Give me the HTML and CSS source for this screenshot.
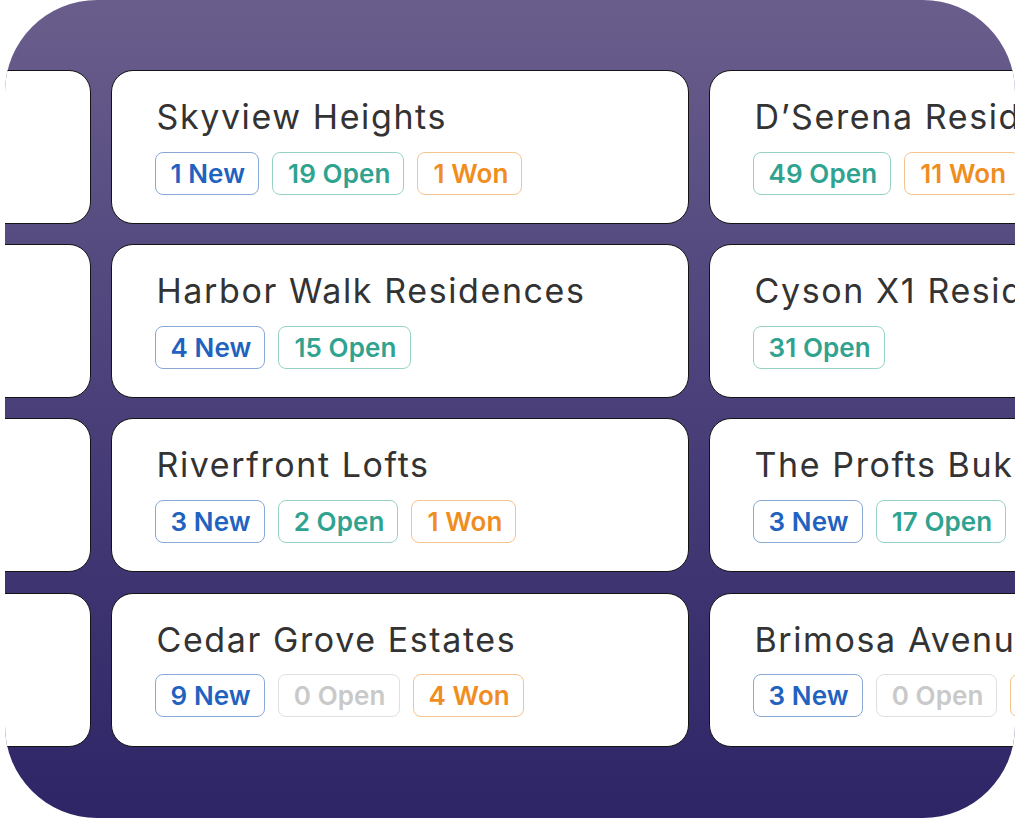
FILE: index.html
```html
<!DOCTYPE html>
<html lang="en">
<head>
<meta charset="utf-8">
<title>Projects</title>
<link rel="stylesheet" href="styles.css">
</head>
<body>
<div class="frame">
  <div class="grid">
    <div class="card"><div class="title">Parkside</div><div class="badges"><span class="badge new">2 New</span></div></div>
    <div class="card"><div class="title">Skyview Heights</div><div class="badges"><span class="badge new">1 New</span><span class="badge open">19 Open</span><span class="badge won">1 Won</span></div></div>
    <div class="card"><div class="title">D’Serena Residences</div><div class="badges"><span class="badge open">49 Open</span><span class="badge won">11 Won</span></div></div>

    <div class="card"><div class="title">Marina</div><div class="badges"><span class="badge open">5 Open</span></div></div>
    <div class="card"><div class="title">Harbor Walk Residences</div><div class="badges"><span class="badge new">4 New</span><span class="badge open">15 Open</span></div></div>
    <div class="card"><div class="title">Cyson X1 Residences</div><div class="badges"><span class="badge open">31 Open</span></div></div>

    <div class="card"><div class="title">Lakeview</div><div class="badges"><span class="badge new">1 New</span></div></div>
    <div class="card"><div class="title">Riverfront Lofts</div><div class="badges"><span class="badge new">3 New</span><span class="badge open">2 Open</span><span class="badge won">1 Won</span></div></div>
    <div class="card"><div class="title">The Profts Bukit Timah</div><div class="badges"><span class="badge new">3 New</span><span class="badge open">17 Open</span></div></div>

    <div class="card"><div class="title">Oakwood</div><div class="badges"><span class="badge won">2 Won</span></div></div>
    <div class="card"><div class="title">Cedar Grove Estates</div><div class="badges"><span class="badge new">9 New</span><span class="badge zero">0 Open</span><span class="badge won">4 Won</span></div></div>
    <div class="card"><div class="title">Brimosa Avenue</div><div class="badges"><span class="badge new">3 New</span><span class="badge zero">0 Open</span><span class="badge won">2 Won</span></div></div>
  </div>
</div>
</body>
</html>
```
FILE: styles.css
```css
html, body {
  margin: 0;
  padding: 0;
  background: #ffffff;
}
body {
  width: 1020px;
  height: 818px;
  overflow: hidden;
  font-family: Inter, "Noto Sans", sans-serif;
}
.frame {
  margin: 0 5px;
  width: 1010px;
  height: 818px;
  border-radius: 92px;
  overflow: hidden;
  background: linear-gradient(180deg, #695e8b 0%, #4d427b 45%, #2d2566 100%);
}
.grid {
  display: grid;
  grid-template-columns: repeat(3, 578px);
  grid-auto-rows: 154px;
  column-gap: 20px;
  row-gap: 20.2px;
  margin-left: -492px;
  padding-top: 70px;
}
.card {
  box-sizing: border-box;
  background: #ffffff;
  border: 1.5px solid #141414;
  border-radius: 22px;
  padding: 26px 0 0 42.5px;
  display: flex;
  flex-direction: column;
  gap: 14.5px;
  white-space: nowrap;
  overflow: hidden;
}
.title {
  padding-left: 2px;
  font-size: 34px;
  line-height: 40px;
  letter-spacing: 1.6px;
  color: #333333;
  font-weight: 400;
}
.badges {
  display: flex;
  gap: 13px;
}
.badge {
  box-sizing: border-box;
  height: 43px;
  line-height: 41px;
  padding: 0 13px 0 15px;
  border: 1px solid;
  border-radius: 8px;
  font-size: 26px;
  font-weight: 600;
  letter-spacing: 0.1px;
}
.new { color: #1f62c0; border-color: #8aa8d6; }
.open { color: #2fa390; border-color: #98d2c7; }
.won { color: #f08d1f; border-color: #f5c38c; }
.zero { color: #c9c9c9; border-color: #e0e0e0; }
```
